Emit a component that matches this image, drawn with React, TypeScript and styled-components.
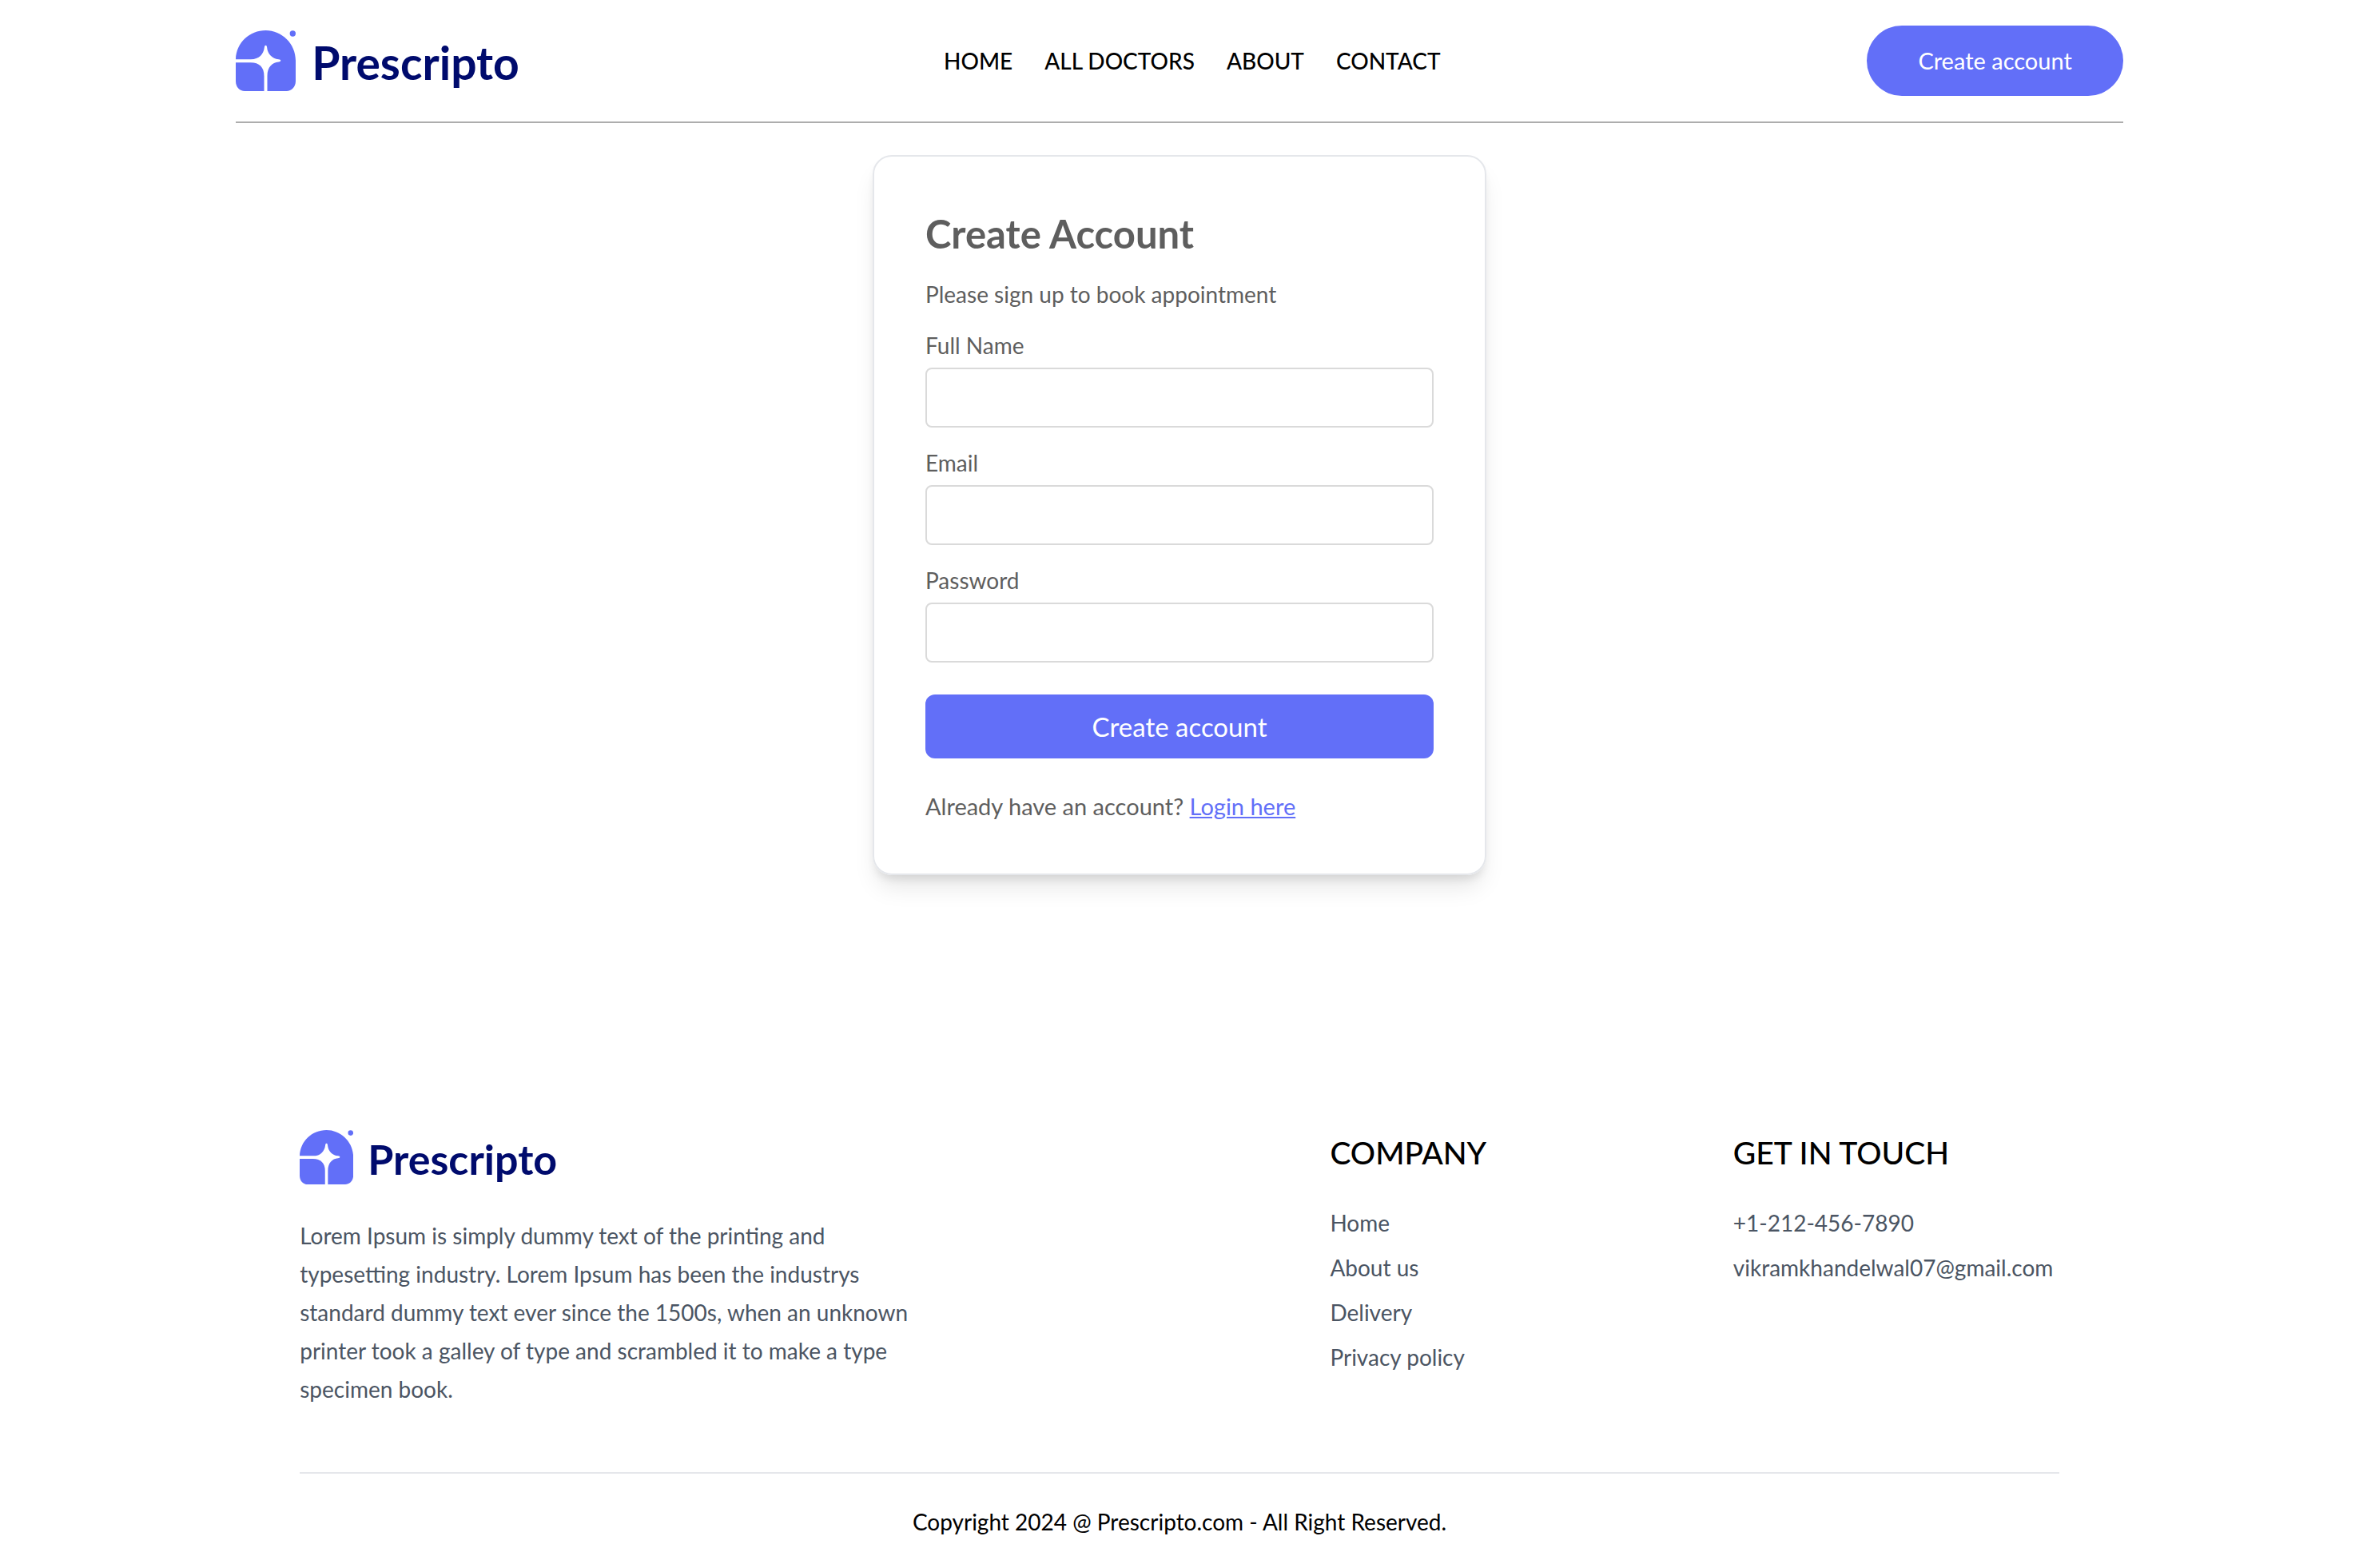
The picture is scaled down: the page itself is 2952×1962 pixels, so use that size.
import { useId } from "react";
import styled, { createGlobalStyle } from "styled-components";

const color = {
  primary: "#626ff8",
  navy: "#000b6d",
  form: "#5e5e5e",
  muted: "#4b5563",
  line: "#e5e7eb",
  field: "#dadada",
};

const GlobalStyle = createGlobalStyle`
  *, *::before, *::after { box-sizing: border-box; }
  body {
    margin: 0;
    background: #fff;
    color: #000;
    font-family: Lato, "Liberation Sans", sans-serif;
    font-size: 28px;
    line-height: 40px;
  }
  h1, h2, p, ul { margin: 0; padding: 0; font-weight: 400; }
  ul { list-style: none; }
  a { color: inherit; text-decoration: none; }
  button, input { font: inherit; color: inherit; }
`;

const Page = styled.div`
  margin: 0 10%;
`;

const Header = styled.header`
  display: flex;
  align-items: center;
  justify-content: space-between;
  padding: 32px 0;
  margin-bottom: 40px;
  border-bottom: 2px solid #adadad;
`;

const LogoLink = styled.a<{ $small?: boolean }>`
  display: flex;
  align-items: center;
  gap: ${(p) => (p.$small ? 18 : 20)}px;
  width: ${(p) => (p.$small ? 320 : 352)}px;
  height: ${(p) => (p.$small ? 68 : 76)}px;
  color: ${color.navy};
  font-size: ${(p) => (p.$small ? 52 : 57)}px;
  font-weight: 700;
  line-height: 68px;

  svg {
    height: 100%;
    flex: none;
  }

  span {
    padding-top: 4px;
  }
`;

const Nav = styled.nav`
  display: flex;
  gap: 40px;
  font-weight: 500;
`;

const PillButton = styled.button`
  padding: 24px 64px;
  border: 0;
  border-radius: 44px;
  background: ${color.primary};
  color: #fff;
  font-size: 29px;
  cursor: pointer;
`;

const Card = styled.form`
  display: flex;
  flex-direction: column;
  gap: 24px;
  width: 768px;
  margin: 0 auto;
  padding: 64px;
  border: 2px solid ${color.line};
  border-radius: 24px;
  color: ${color.form};
  box-shadow: 0 20px 30px -6px rgba(0, 0, 0, 0.1), 0 8px 12px -4px rgba(0, 0, 0, 0.1);
`;

const CardTitle = styled.h1`
  font-size: 49px;
  font-weight: 700;
  line-height: 64px;
`;

const FieldLabel = styled.label`
  display: block;
  margin-bottom: 8px;
`;

const FieldInput = styled.input`
  display: block;
  width: 100%;
  height: 75px;
  padding: 16px;
  border: 2px solid ${color.field};
  border-radius: 8px;
  background: #fff;
`;

const SubmitButton = styled.button`
  margin: 16px 0;
  padding: 16px;
  border: 0;
  border-radius: 12px;
  background: ${color.primary};
  color: #fff;
  font-size: 33px;
  line-height: 48px;
  cursor: pointer;
`;

const LoginPrompt = styled.p`
  font-size: 29px;
`;

const InlineLink = styled.a`
  color: ${color.primary};
  text-decoration: underline;
`;

const Footer = styled.footer`
  margin: 319px 80px 0;
`;

const FooterGrid = styled.div`
  display: grid;
  grid-template-columns: 3fr 1fr 408px;
  gap: 112px;
  margin-bottom: 80px;
  color: ${color.muted};
`;

const About = styled.p`
  width: 67%;
  margin-top: 40px;
  line-height: 48px;
`;

const FooterTitle = styled.h2`
  margin-bottom: 40px;
  color: #000;
  font-size: 39px;
  font-weight: 500;
  line-height: 56px;
  white-space: nowrap;
`;

const FooterList = styled.ul`
  display: flex;
  flex-direction: column;
  gap: 16px;
`;

const Copyright = styled.p`
  padding: 40px 0;
  border-top: 2px solid ${color.line};
  text-align: center;
`;

function Logo({ small }: { small?: boolean }) {
  return (
    <LogoLink href="#" $small={small}>
      <svg viewBox="0 0 224 227" aria-hidden="true">
        <path
          fill={color.primary}
          d="M0 108C2 46 52 0 112 0S224 50 224 112V190C224 212 208 227 190 227H118V170C118 138 136 120 160 118C166 117 168 116 168 113S166 109 160 108C136 105 119 88 117 64C116 58 115 56 112 56S108 58 107 64C104 88 88 108 56 108Z"
        />
        <path fill={color.primary} d="M0 120H56C88 120 106 138 106 170V227H34C14 227 0 212 0 190Z" />
        <circle fill={color.primary} cx="213" cy="12" r="11" />
      </svg>
      <span>Prescripto</span>
    </LogoLink>
  );
}

function Field({ label, type }: { label: string; type: string }) {
  const id = useId();
  return (
    <div>
      <FieldLabel htmlFor={id}>{label}</FieldLabel>
      <FieldInput id={id} type={type} />
    </div>
  );
}

const navItems = ["HOME", "ALL DOCTORS", "ABOUT", "CONTACT"];
const companyItems = ["Home", "About us", "Delivery", "Privacy policy"];

export default function App() {
  return (
    <>
      <GlobalStyle />
      <Page>
        <Header>
          <Logo />
          <Nav>
            {navItems.map((item) => (
              <a key={item} href="#">{item}</a>
            ))}
          </Nav>
          <PillButton type="button">Create account</PillButton>
        </Header>

        <main>
          <Card onSubmit={(e) => e.preventDefault()}>
            <CardTitle>Create Account</CardTitle>
            <p>Please sign up to book appointment</p>
            <Field label="Full Name" type="text" />
            <Field label="Email" type="email" />
            <Field label="Password" type="password" />
            <SubmitButton type="submit">Create account</SubmitButton>
            <LoginPrompt>
              Already have an account? <InlineLink href="#">Login here</InlineLink>
            </LoginPrompt>
          </Card>
        </main>

        <Footer>
          <FooterGrid>
            <div>
              <Logo small />
              <About>
                Lorem Ipsum is simply dummy text of the printing and typesetting industry. Lorem
                Ipsum has been the industrys standard dummy text ever since the 1500s, when an
                unknown printer took a galley of type and scrambled it to make a type specimen book.
              </About>
            </div>
            <div>
              <FooterTitle>COMPANY</FooterTitle>
              <FooterList>
                {companyItems.map((item) => (
                  <li key={item}><a href="#">{item}</a></li>
                ))}
              </FooterList>
            </div>
            <div>
              <FooterTitle>GET IN TOUCH</FooterTitle>
              <FooterList>
                <li>+1-212-456-7890</li>
                <li>vikramkhandelwal07@gmail.com</li>
              </FooterList>
            </div>
          </FooterGrid>
          <Copyright>Copyright 2024 @ Prescripto.com - All Right Reserved.</Copyright>
        </Footer>
      </Page>
    </>
  );
}
